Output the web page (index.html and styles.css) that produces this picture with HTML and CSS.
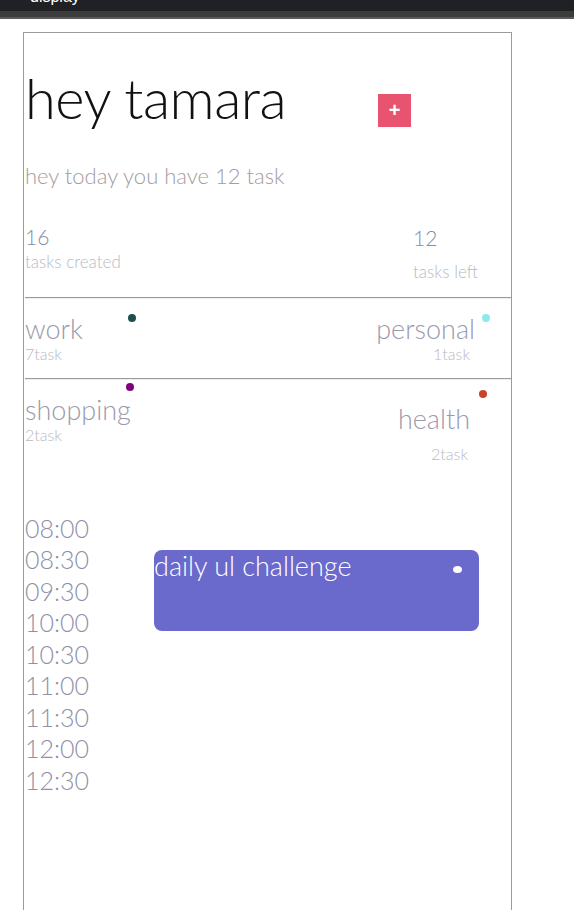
FILE: index.html
```html
<!DOCTYPE html>
<html>
<head>
<meta charset="utf-8">
<link rel="stylesheet" href="styles.css">
</head>
<body>
<div class="topbar"><span class="toptext">display</span></div>
<div class="topstrip"></div>
<main class="app">
  <section class="greeting">
    <h1 class="title">hey tamara</h1>
    <button class="add">+</button>
  </section>
  <p class="subtitle">hey today you have 12 task</p>
  <section class="stats">
    <div class="stat">
      <div class="stat-num">16</div>
      <div class="stat-label">tasks created</div>
    </div>
    <div class="stat stat-right">
      <div class="stat-num">12</div>
      <div class="stat-label">tasks left</div>
    </div>
  </section>
  <hr class="rule">
  <section class="cats">
    <div class="cat cat-work">
      <span class="dot dot-work"></span>
      <div class="cat-name">work</div>
      <div class="cat-count">7task</div>
    </div>
    <div class="cat cat-personal">
      <span class="dot dot-personal"></span>
      <div class="cat-name">personal</div>
      <div class="cat-count">1task</div>
    </div>
  </section>
  <hr class="rule">
  <section class="cats cats-2">
    <div class="cat cat-shopping">
      <span class="dot dot-shopping"></span>
      <div class="cat-name">shopping</div>
      <div class="cat-count">2task</div>
    </div>
    <div class="cat cat-health">
      <span class="dot dot-health"></span>
      <div class="cat-name">health</div>
      <div class="cat-count">2task</div>
    </div>
  </section>
  <section class="schedule">
    <ul class="times">
      <li>08:00</li>
      <li>08:30</li>
      <li>09:30</li>
      <li>10:00</li>
      <li>10:30</li>
      <li>11:00</li>
      <li>11:30</li>
      <li>12:00</li>
      <li>12:30</li>
    </ul>
    <div class="event">
      <span class="event-title">daily ul challenge</span>
      <span class="event-dot"></span>
    </div>
  </section>
</main>
</body>
</html>
```
FILE: styles.css
```css
html, body {
  margin: 0;
  padding: 0;
  background: #ffffff;
  font-family: Lato, "Open Sans", sans-serif;
  font-weight: 300;
}

.topbar {
  height: 11px;
  background: #202124;
  overflow: hidden;
  position: relative;
}

.toptext {
  position: absolute;
  left: 30px;
  top: -12px;
  font-size: 16px;
  color: #ffffff;
  font-family: "Liberation Sans", sans-serif;
}

.topstrip {
  height: 6px;
  background: #3c3c3c;
  border-bottom: 2px solid #5b5b5b;
}

.app {
  margin: 13px 0 0 23px;
  width: 489px;
  min-height: 900px;
  border: 1px solid #9b9b9b;
  padding-left: 1px;
  box-sizing: border-box;
}

.greeting {
  display: flex;
  align-items: flex-start;
  height: 81px;
  padding-top: 37px;
}

.title {
  margin: 0;
  font-size: 56px;
  font-weight: 300;
  color: #111111;
  letter-spacing: -0.5px;
  line-height: 1;
}

.add {
  margin: 24px 0 0 92px;
  width: 33px;
  height: 33px;
  border: none;
  background: #e8546f;
  color: #ffffff;
  font-size: 20px;
  font-weight: 700;
  font-family: "Liberation Sans", sans-serif;
  padding: 0;
  line-height: 33px;
}

.subtitle {
  margin: 11px 0 0;
  font-size: 22px;
  color: #a39c9e;
  line-height: 1.3;
}

.stats {
  display: flex;
  justify-content: space-between;
  margin-top: 33px;
  height: 73px;
}

.stat-num {
  font-size: 21px;
  color: #8a8aa8;
  line-height: 26px;
}

.stat-label {
  font-size: 17px;
  color: #b9b9c2;
  line-height: 22px;
  margin-top: 1px;
}

.stat-right {
  width: 98px;
  padding-top: 1px;
}

.stat-right .stat-label {
  margin-top: 10px;
}

.rule {
  margin: 0;
  border: 0;
  border-top: 1px solid #9a9a9a;
  border-bottom: 1px solid #eeeeee;
}

.cats {
  display: flex;
  justify-content: space-between;
  height: 79px;
}

.cat {
  position: relative;
}

.cat-name {
  font-size: 27px;
  color: #9a9aae;
  line-height: 33px;
}

.cat-count {
  font-size: 16px;
  color: #b9b9c2;
  line-height: 18px;
}

.dot {
  position: absolute;
  width: 8px;
  height: 8px;
  border-radius: 50%;
}

.cat-work {
  padding-top: 13px;
}
.dot-work {
  background: #1d4f4f;
  left: 103px;
  top: 15px;
}

.cat-personal {
  padding-top: 13px;
  padding-right: 36px;
  text-align: right;
}
.cat-personal .cat-count {
  padding-right: 5px;
}
.dot-personal {
  background: #8ce9ef;
  right: 21px;
  top: 15px;
}

.cat-shopping {
  padding-top: 13px;
}
.dot-shopping {
  background: #800080;
  left: 101px;
  top: 3px;
}

.cat-health {
  padding-top: 22px;
  padding-right: 41px;
  text-align: right;
}
.cat-health .cat-count {
  margin-top: 10px;
  padding-right: 2px;
}
.dot-health {
  background: #c8442a;
  right: 24px;
  top: 10px;
}

.cats-2 {
  height: 120px;
}

.schedule {
  display: flex;
  align-items: flex-start;
  margin-top: 13px;
}

.times {
  list-style: none;
  margin: 0;
  padding: 0;
  width: 129px;
}

.times li {
  font-size: 25px;
  color: #8f8fa8;
  line-height: 31.5px;
}

.event {
  margin-top: 37px;
  width: 325px;
  height: 81px;
  background: #6a69cc;
  border-radius: 8px;
  display: flex;
  justify-content: space-between;
  align-items: flex-start;
}

.event-title {
  font-size: 27px;
  color: #ffffff;
  line-height: 32px;
}

.event-dot {
  width: 9px;
  height: 7px;
  border-radius: 50%;
  background: #ffffff;
  margin: 16px 17px 0 0;
}
```
